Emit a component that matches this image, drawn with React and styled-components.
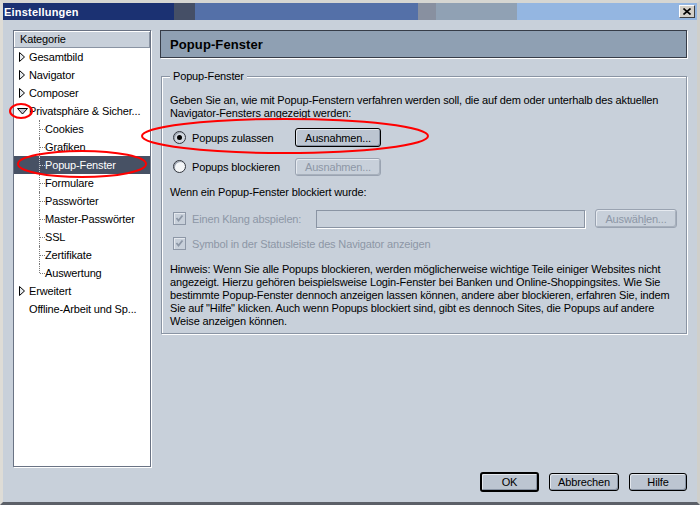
import React from 'react';
import styled, { createGlobalStyle } from 'styled-components';

const FONT = `"Liberation Sans", Arial, sans-serif`;
const BG = '#c8d0da';
const DISABLED = '#8d97a6';

const GlobalStyle = createGlobalStyle`
  body {
    margin: 0;
    background: ${BG};
    font-family: ${FONT};
    font-size: 11px;
    letter-spacing: -0.15px;
  }
`;

const Window = styled.div`
  position: relative;
  width: 700px;
  height: 505px;
  box-sizing: border-box;
  background: ${BG};
  border-top: 3px solid #d6d6d2;
  border-left: 3px solid #dedcd6;
  border-right: 3px solid #cfcfcb;
  border-bottom: 3px solid #5c6068;
  display: flex;
  flex-direction: column;
`;

const TitleBar = styled.div`
  height: 17px;
  display: flex;
  align-items: center;
  justify-content: space-between;
  padding: 0 2px 0 1px;
  background: linear-gradient(to right,
    #1b3172 0, #1b3172 171px,
    #454f66 171px, #454f66 192px,
    #5470a8 192px, #5470a8 415px,
    #8890a0 415px, #8890a0 433px,
    #90a1b4 433px, #90a1b4 514px,
    #94b6e1 514px);
`;

const Title = styled.span`
  color: #fff;
  font-weight: bold;
  font-size: 11px;
  letter-spacing: 0.2px;
`;

const CloseBox = styled.div`
  width: 16px;
  height: 13px;
  box-sizing: border-box;
  background: #d4d0c8;
  border: 1px solid;
  border-color: #fff #404040 #404040 #fff;
  display: flex;
  align-items: center;
  justify-content: center;
`;

const Body = styled.div`
  flex: 1;
  display: flex;
  flex-direction: column;
  padding: 10px 10px 0 10px;
`;

const Columns = styled.div`
  display: flex;
  gap: 9px;
`;

const Sidebar = styled.div`
  width: 138px;
  height: 437px;
  box-sizing: border-box;
  background: #fff;
  border: 1px solid #6a7384;
  box-shadow: 1px 1px 0 #fff;
  display: flex;
  flex-direction: column;
`;

const SideHeader = styled.div`
  height: 16px;
  line-height: 16px;
  padding-left: 6px;
  background: ${BG};
  border-bottom: 1px solid #8a94a3;
  box-shadow: inset 1px 1px 0 #fff, inset -1px 0 0 #8a94a3;
`;

const TreeRow = styled.div`
  position: relative;
  height: 18px;
  line-height: 18px;
  display: flex;
  align-items: center;
  padding-left: ${p => (p.$child ? '31px' : '3px')};
  white-space: nowrap;
  background: ${p => (p.$selected ? '#475164' : 'transparent')};
  color: ${p => (p.$selected ? '#fff' : '#000')};

  ${p => p.$child && `
    &::before {
      content: '';
      position: absolute;
      left: 25px;
      top: 0;
      height: ${p.$last ? '9px' : '18px'};
      border-left: 1px dotted ${p.$selected ? '#c8ccd4' : '#7a7a7a'};
    }
    &::after {
      content: '';
      position: absolute;
      left: 26px;
      top: 9px;
      width: 5px;
      border-top: 1px dotted ${p.$selected ? '#c8ccd4' : '#7a7a7a'};
    }
  `}
`;

const Expander = styled.svg`
  width: 12px;
  height: 12px;
  flex: none;
`;

const Main = styled.div`
  width: 527px;
  display: flex;
  flex-direction: column;
`;

const PanelHeader = styled.div`
  height: 28px;
  box-sizing: border-box;
  background: #8fa0b3;
  border: 1px solid #363c48;
  box-shadow: 1px 1px 0 #fff;
  display: flex;
  align-items: center;
  padding-left: 9px;
  font-size: 13px;
  font-weight: bold;
  letter-spacing: 0.1px;
`;

const GroupBox = styled.div`
  margin: 18px 0 0 1px;
  width: 526px;
  box-sizing: border-box;
  border: 1px solid #8a94a3;
  box-shadow: inset 1px 1px 0 #fff, 1px 1px 0 #fff;
  padding: 0 8px 5px 8px;
  display: flex;
  flex-direction: column;
`;

const GroupTitle = styled.span`
  align-self: flex-start;
  margin: -7px 0 0 0;
  padding: 0 3px;
  line-height: 13px;
  background: ${BG};
`;

const Para = styled.div`
  margin-top: ${p => p.$top}px;
  line-height: 13px;
  color: ${p => (p.$disabled ? DISABLED : '#000')};
  white-space: nowrap;
`;

const OptionRow = styled.div`
  margin-top: ${p => p.$top}px;
  height: ${p => p.$h || 19}px;
  display: flex;
  align-items: center;
  padding-left: 3px;
`;

const Radio = styled.span`
  width: 13px;
  height: 13px;
  box-sizing: border-box;
  border-radius: 50%;
  border: 1px solid #30343c;
  background: ${p => (p.$checked ? '#d2d8e0' : '#f4f6f8')};
  box-shadow: inset 1px 1px 0 #9aa3b0;
  display: flex;
  align-items: center;
  justify-content: center;
  flex: none;

  &::after {
    content: '';
    width: 5px;
    height: 5px;
    border-radius: 50%;
    background: ${p => (p.$checked ? '#000' : 'transparent')};
  }
`;

const CheckBox = styled.span`
  width: 13px;
  height: 13px;
  box-sizing: border-box;
  border: 1px solid ${DISABLED};
  background: ${BG};
  box-shadow: inset 1px 1px 0 #e4e8ee;
  display: flex;
  align-items: center;
  justify-content: center;
  flex: none;
`;

const OptionLabel = styled.span`
  margin-left: 6px;
  width: ${p => (p.$w ? `${p.$w}px` : 'auto')};
  flex: none;
  white-space: nowrap;
  color: ${p => (p.$disabled ? DISABLED : '#000')};
`;

const Button = styled.button`
  font-family: ${FONT};
  font-size: 11px;
  letter-spacing: -0.15px;
  width: ${p => p.$w}px;
  height: ${p => p.$h || (p.$default ? 20 : 18)}px;
  margin-left: ${p => p.$ml || 0}px;
  padding: 0;
  box-sizing: border-box;
  border-radius: 3px;
  border: ${p => (p.$default ? 2 : 1)}px solid ${p => (p.disabled ? '#9aa3b1' : '#000')};
  background: ${p => (p.disabled ? BG : '#bcc5d1')};
  color: ${p => (p.disabled ? DISABLED : '#000')};
  box-shadow: ${p => (p.disabled
    ? 'inset 1px 1px 0 #e6eaf0, inset -1px -1px 0 #a7b0bc'
    : 'inset 1px 1px 0 #e4e8ee, inset -1px -1px 0 #8893a3')};
  flex: none;
`;

const TextField = styled.div`
  width: 269px;
  height: 18px;
  box-sizing: border-box;
  border: 1px solid #8a94a3;
  box-shadow: 1px 1px 0 #fff;
  flex: none;
`;

const Footer = styled.div`
  display: flex;
  justify-content: flex-end;
  align-items: center;
  gap: 10px;
  margin-top: 5px;
  height: 20px;
`;

const Annotations = styled.svg`
  position: absolute;
  top: -3px;
  left: -3px;
  width: 700px;
  height: 505px;
  pointer-events: none;
`;

const RightArrow = () => (
  <Expander viewBox="0 0 12 12">
    <polygon points="2.5,1.5 7.5,6 2.5,10.5" fill="#e8ecf0" stroke="#000" strokeWidth="1" />
  </Expander>
);

const DownArrow = () => (
  <Expander viewBox="0 0 12 12">
    <polygon points="0.5,3.5 10.5,3.5 5.5,9" fill="#c4cad4" stroke="#000" strokeWidth="1" />
  </Expander>
);

const Blank = () => <Expander as="span" />;

const Check = () => (
  <svg width="9" height="9" viewBox="0 0 9 9">
    <polyline points="1.5,4 3.5,6.5 7.5,1.5" fill="none" stroke={DISABLED} strokeWidth="1.8" />
  </svg>
);

const children = ['Cookies', 'Grafiken', 'Popup-Fenster', 'Formulare', 'Passwörter',
  'Master-Passwörter', 'SSL', 'Zertifikate', 'Auswertung'];

export default function App() {
  return (
    <>
      <GlobalStyle />
      <Window>
        <TitleBar>
          <Title>Einstellungen</Title>
          <CloseBox>
            <svg width="8" height="7" viewBox="0 0 8 7">
              <path d="M0.5 0.5 L7.5 6.5 M7.5 0.5 L0.5 6.5" stroke="#000" strokeWidth="1.6" />
            </svg>
          </CloseBox>
        </TitleBar>
        <Body>
          <Columns>
            <Sidebar>
              <SideHeader>Kategorie</SideHeader>
              <TreeRow><RightArrow />Gesamtbild</TreeRow>
              <TreeRow><RightArrow />Navigator</TreeRow>
              <TreeRow><RightArrow />Composer</TreeRow>
              <TreeRow><DownArrow />Privatsphäre &amp; Sicher...</TreeRow>
              {children.map((c, i) => (
                <TreeRow key={c} $child $selected={c === 'Popup-Fenster'} $last={i === children.length - 1}>
                  {c}
                </TreeRow>
              ))}
              <TreeRow><RightArrow />Erweitert</TreeRow>
              <TreeRow><Blank />Offline-Arbeit und Sp...</TreeRow>
            </Sidebar>
            <Main>
              <PanelHeader>Popup-Fenster</PanelHeader>
              <GroupBox>
                <GroupTitle>Popup-Fenster</GroupTitle>
                <Para $top={11}>
                  Geben Sie an, wie mit Popup-Fenstern verfahren werden soll, die auf dem oder unterhalb des aktuellen<br />
                  Navigator-Fensters angezeigt werden:
                </Para>
                <OptionRow $top={8}>
                  <Radio $checked />
                  <OptionLabel $w={103}>Popups zulassen</OptionLabel>
                  <Button $w={86} $h={19}>Ausnahmen...</Button>
                </OptionRow>
                <OptionRow $top={10}>
                  <Radio />
                  <OptionLabel $w={103}>Popups blockieren</OptionLabel>
                  <Button $w={86} disabled>Ausnahmen...</Button>
                </OptionRow>
                <Para $top={10}>Wenn ein Popup-Fenster blockiert wurde:</Para>
                <OptionRow $top={10}>
                  <CheckBox><Check /></CheckBox>
                  <OptionLabel $w={124} $disabled>Einen Klang abspielen:</OptionLabel>
                  <TextField />
                  <Button $w={82} $h={19} $ml={10} disabled>Auswäh<u>l</u>en...</Button>
                </OptionRow>
                <OptionRow $top={9} $h={13}>
                  <CheckBox><Check /></CheckBox>
                  <OptionLabel $disabled>Symbol in der Statusleiste des Navigator anzeigen</OptionLabel>
                </OptionRow>
                <Para $top={13}>
                  Hinweis: Wenn Sie alle Popups blockieren, werden möglicherweise wichtige Teile einiger Websites nicht<br />
                  angezeigt. Hierzu gehören beispielsweise Login-Fenster bei Banken und Online-Shoppingsites. Wie Sie<br />
                  bestimmte Popup-Fenster dennoch anzeigen lassen können, andere aber blockieren, erfahren Sie, indem<br />
                  Sie auf "Hilfe" klicken. Auch wenn Popups blockiert sind, gibt es dennoch Sites, die Popups auf andere<br />
                  Weise anzeigen können.
                </Para>
              </GroupBox>
            </Main>
          </Columns>
          <Footer>
            <Button $w={59} $default>OK</Button>
            <Button $w={70}>Abbrechen</Button>
            <Button $w={58}>Hilfe</Button>
          </Footer>
        </Body>
        <Annotations viewBox="0 0 700 505">
          <g fill="none" stroke="#ff0000" strokeWidth="2">
            <ellipse cx="21" cy="111" rx="11" ry="7" />
            <ellipse cx="285" cy="136" rx="143" ry="17" />
            <ellipse cx="82" cy="164" rx="64" ry="13" />
          </g>
        </Annotations>
      </Window>
    </>
  );
}
